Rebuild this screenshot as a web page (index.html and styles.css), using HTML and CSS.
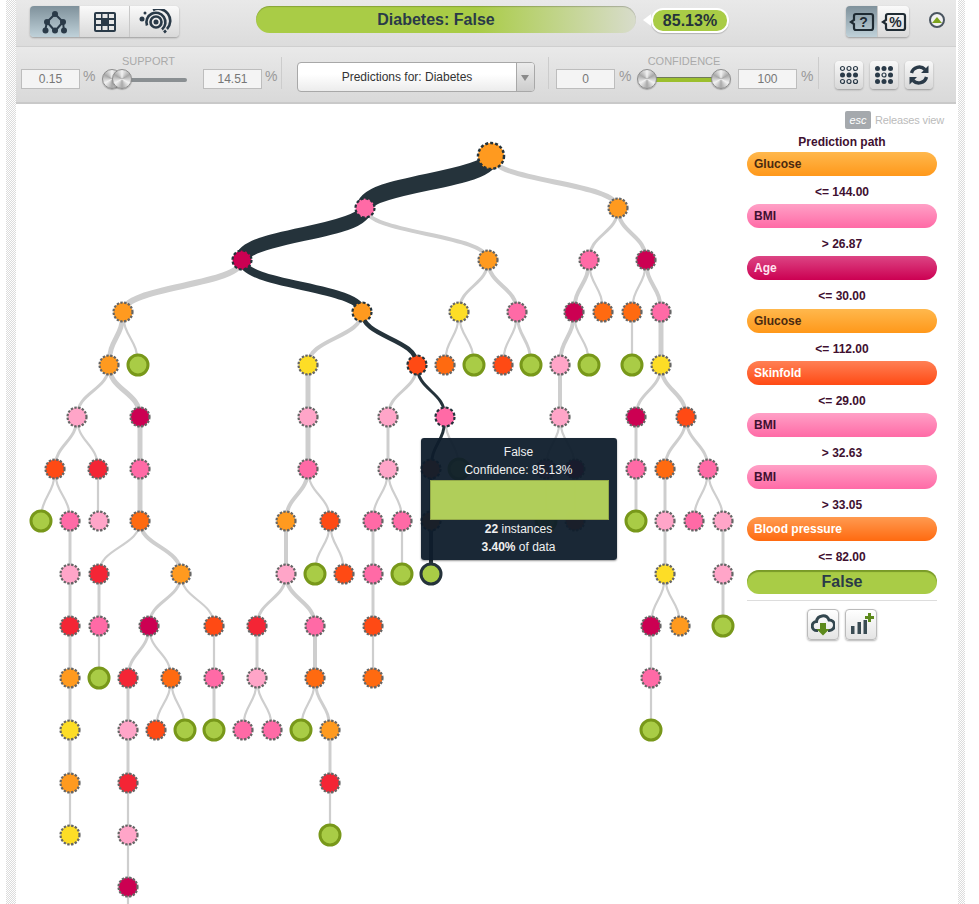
FILE: index.html
```html
<!DOCTYPE html>
<html lang="en">
<head>
    <meta charset="UTF-8">
    <meta name="viewport" content="width=device-width, initial-scale=1.0">
    <title>Decision tree: Diabetes</title>
    <link rel="stylesheet" href="styles.css">
</head>
<body>
<div class="frame">
<div class="app">

    <!-- top bar -->
    <div class="topbar">
        <div class="btn-group views">
            <button class="seg active">
                <svg width="26" height="24" viewBox="0 0 26 24">
                    <path class="ic-line" d="M13 4 5 12 3 21M13 4 21 12 22 21M5 12 13 21M21 12 13 21"/>
                    <circle class="ic-dot" cx="13" cy="4" r="3"/><circle class="ic-dot" cx="5" cy="12" r="3"/><circle class="ic-dot" cx="21" cy="12" r="3"/>
                    <circle class="ic-dot" cx="3.500" cy="20.500" r="3"/><circle class="ic-dot" cx="13" cy="20.500" r="3"/><circle class="ic-dot" cx="22" cy="20.500" r="3"/>
                </svg>
            </button>
            <button class="seg">
                <svg width="24" height="22" viewBox="0 0 24 22">
                    <rect class="ic-dot" x="1" y="1" width="22" height="20" rx="2"/>
                    <path class="ic-cells" d="M3 3h5v4H3zM9.500 3h5v4h-5zM16 3h5v4h-5zM3 9h5v4H3zM16 9h5v4h-5zM3 15h5v4H3zM9.500 15h5v4h-5zM16 15h5v4h-5z"/>
                </svg>
            </button>
            <button class="seg">
                <svg width="34" height="26" viewBox="0 0 34 26">
                    <circle class="ic-dot" cx="4" cy="10" r="2.500"/><circle class="ic-dot" cx="7" cy="4" r="1.500"/>
                    <circle class="ic-dot" cx="18" cy="13" r="2.500"/>
                    <circle class="ic-ring" cx="18" cy="13" r="5.500"/>
                    <path class="ic-ring" d="M9 16.500A9.500 9.500 0 1 1 24 20.500"/>
                    <path class="ic-ring" d="M15 1A12 12 0 0 1 29 20M26 23.500 28 21.500"/>
                </svg>
            </button>
        </div>

        <div class="result">Diabetes: False</div>
        <div class="bubble">85.13%</div>

        <div class="btn-group modes">
            <button class="seg active">
                <svg width="26" height="22" viewBox="0 0 26 22">
                    <path class="ic-bubble" d="M7 3h15a2 2 0 0 1 2 2v12a2 2 0 0 1-2 2H7a2 2 0 0 1-2-2v-4l-3-2 3-2V5a2 2 0 0 1 2-2z"/>
                    <text class="ic-text" x="14.500" y="16">?</text>
                </svg>
            </button>
            <button class="seg">
                <svg width="26" height="22" viewBox="0 0 26 22">
                    <path class="ic-bubble" d="M7 3h15a2 2 0 0 1 2 2v12a2 2 0 0 1-2 2H7a2 2 0 0 1-2-2v-4l-3-2 3-2V5a2 2 0 0 1 2-2z"/>
                    <text class="ic-text" x="14.500" y="16">%</text>
                </svg>
            </button>
        </div>

        <div class="collapse"><span class="collapse-arrow"></span></div>
    </div>

    <!-- filters -->
    <div class="filters">
        <div class="num">0.15</div>
        <div class="unit">%</div>
        <div class="range support">
            <div class="range-label">SUPPORT</div>
            <div class="range-track">
                <div class="track"></div>
                <div class="knob"></div>
                <div class="knob"></div>
            </div>
        </div>
        <div class="num n2">14.51</div>
        <div class="unit">%</div>
        <div class="divider d1"></div>

        <div class="select">
            <div class="select-text">Predictions for: Diabetes</div>
            <div class="select-arrow"></div>
        </div>
        <div class="divider d2"></div>

        <div class="num n3">0</div>
        <div class="unit u3">%</div>
        <div class="range confidence">
            <div class="range-label">CONFIDENCE</div>
            <div class="range-track">
                <div class="track"></div>
                <div class="knob"></div>
                <div class="knob"></div>
            </div>
        </div>
        <div class="num n4">100</div>
        <div class="unit u3">%</div>
        <div class="divider d3"></div>

        <button class="tool t1">
            <svg width="20" height="20" viewBox="0 0 20 20">
                <g class="dots-open">
                    <circle cx="3.500" cy="3.500" r="2"/><circle cx="10" cy="3.500" r="2"/><circle cx="16.500" cy="3.500" r="2"/>
                    <circle cx="3.500" cy="16.500" r="2"/><circle cx="10" cy="16.500" r="2"/><circle cx="16.500" cy="16.500" r="2"/>
                </g>
                <circle class="ic-dot" cx="3.500" cy="10" r="2.500"/><circle class="ic-dot" cx="10" cy="10" r="2.500"/><circle class="ic-dot" cx="16.500" cy="10" r="2.500"/>
            </svg>
        </button>
        <button class="tool">
            <svg width="20" height="20" viewBox="0 0 20 20">
                <circle class="ic-dot" cx="3.500" cy="3.500" r="2.500"/><circle class="ic-dot" cx="10" cy="3.500" r="2.500"/><circle class="ic-dot" cx="16.500" cy="3.500" r="2.500"/>
                <circle class="ic-dot" cx="3.500" cy="10" r="2.500"/><circle class="dots-open one" cx="10" cy="10" r="2"/><circle class="ic-dot" cx="16.500" cy="10" r="2.500"/>
                <circle class="ic-dot" cx="3.500" cy="16.500" r="2.500"/><circle class="ic-dot" cx="10" cy="16.500" r="2.500"/><circle class="ic-dot" cx="16.500" cy="16.500" r="2.500"/>
            </svg>
        </button>
        <button class="tool">
            <svg width="22" height="22" viewBox="0 0 22 22">
                <path class="ic-refresh" d="M3.500 9A8 8 0 0 1 17 5.500"/>
                <path class="ic-refresh" d="M18.500 13A8 8 0 0 1 5 16.500"/>
                <path class="ic-dot" d="M20.500 1.500V9h-7.500zM1.500 20.500V13H9z"/>
            </svg>
        </button>
    </div>

    <!-- tree + side panel -->
    <div class="content">
        <svg class="tree" width="725" height="800" viewBox="16 104 725 800">
            <g class="edges t6">
                <path d="M242 260C242 286 123 286 123 312"/>
            </g>
            <g class="edges t5">
                <path d="M491 156C491 182 618 182 618 208"/>
                <path d="M123 312C123 338 109 338 109 365"/>
                <path d="M109 365C109 391 140 391 140 417"/>
                <path d="M140 417V469"/>
                <path d="M140 469V521"/>
                <path d="M308 365V417"/>
                <path d="M308 417V469"/>
                <path d="M661 312V365"/>
            </g>
            <g class="edges t4">
                <path d="M365 208C365 234 488 234 488 260"/>
                <path d="M618 208C618 234 646 234 646 260"/>
                <path d="M488 260C488 286 517 286 517 312"/>
                <path d="M589 260C589 286 574 286 574 312"/>
                <path d="M646 260C646 286 661 286 661 312"/>
                <path d="M362 312C362 338 308 338 308 365"/>
                <path d="M574 312C574 338 560 338 560 365"/>
                <path d="M560 365V417"/>
                <path d="M661 365C661 391 686 391 686 417"/>
                <path d="M308 469C308 495 286 495 286 521"/>
                <path d="M286 521V574"/>
                <path d="M140 521C140 547 181 547 181 574"/>
                <path d="M286 574C286 600 315 600 315 626"/>
                <path d="M315 626V678"/>
            </g>
            <g class="edges t3">
                <path d="M618 208C618 234 589 234 589 260"/>
                <path d="M488 260C488 286 459 286 459 312"/>
                <path d="M517 312C517 338 531 338 531 365"/>
                <path d="M109 365C109 391 77 391 77 417"/>
                <path d="M417 365C417 391 388 391 388 417"/>
                <path d="M661 365C661 391 636 391 636 417"/>
                <path d="M77 417C77 443 55 443 55 469"/>
                <path d="M388 417V469"/>
                <path d="M636 417V469"/>
                <path d="M686 417C686 443 665 443 665 469"/>
                <path d="M686 417C686 443 708 443 708 469"/>
                <path d="M636 469V521"/>
                <path d="M665 469V521"/>
                <path d="M70 521V574"/>
                <path d="M373 521V574"/>
                <path d="M665 521V574"/>
                <path d="M723 521V574"/>
                <path d="M70 574V626"/>
                <path d="M99 574V626"/>
                <path d="M181 574C181 600 149 600 149 626"/>
                <path d="M286 574C286 600 257 600 257 626"/>
                <path d="M373 574V626"/>
                <path d="M723 574V626"/>
                <path d="M70 626V678"/>
                <path d="M149 626C149 652 128 652 128 678"/>
                <path d="M257 626V678"/>
                <path d="M70 678V730"/>
                <path d="M128 678V730"/>
                <path d="M214 678V730"/>
                <path d="M70 730V783"/>
                <path d="M128 730V783"/>
                <path d="M330 730V783"/>
                <path d="M315 678C315 704 330 704 330 730"/>
            </g>
            <g class="edges t2">
                <path d="M589 260C589 286 603 286 603 312"/>
                <path d="M646 260C646 286 632 286 632 312"/>
                <path d="M123 312C123 338 138 338 138 365"/>
                <path d="M459 312C459 338 445 338 445 365"/>
                <path d="M459 312C459 338 474 338 474 365"/>
                <path d="M517 312C517 338 503 338 503 365"/>
                <path d="M574 312C574 338 589 338 589 365"/>
                <path d="M632 312V365"/>
                <path d="M77 417C77 443 98 443 98 469"/>
                <path d="M445 417C445 443 459 443 459 469"/>
                <path d="M560 417C560 443 546 443 546 469"/>
                <path d="M560 417C560 443 575 443 575 469"/>
                <path d="M55 469C55 495 41 495 41 521"/>
                <path d="M55 469C55 495 70 495 70 521"/>
                <path d="M98 469V521"/>
                <path d="M308 469C308 495 330 495 330 521"/>
                <path d="M388 469C388 495 373 495 373 521"/>
                <path d="M388 469C388 495 402 495 402 521"/>
                <path d="M546 469V521"/>
                <path d="M575 469V521"/>
                <path d="M708 469C708 495 694 495 694 521"/>
                <path d="M708 469C708 495 723 495 723 521"/>
                <path d="M140 521C140 547 99 547 99 574"/>
                <path d="M330 521C330 547 315 547 315 574"/>
                <path d="M330 521C330 547 344 547 344 574"/>
                <path d="M402 521V574"/>
                <path d="M181 574C181 600 214 600 214 626"/>
                <path d="M665 574C665 600 651 600 651 626"/>
                <path d="M665 574C665 600 680 600 680 626"/>
                <path d="M99 626V678"/>
                <path d="M149 626C149 652 171 652 171 678"/>
                <path d="M214 626V678"/>
                <path d="M373 626V678"/>
                <path d="M651 626V678"/>
                <path d="M171 678C171 704 156 704 156 730"/>
                <path d="M171 678C171 704 185 704 185 730"/>
                <path d="M257 678C257 704 243 704 243 730"/>
                <path d="M257 678C257 704 272 704 272 730"/>
                <path d="M315 678C315 704 301 704 301 730"/>
                <path d="M651 678V730"/>
                <path d="M70 783V835"/>
                <path d="M128 783V835"/>
                <path d="M330 783V835"/>
                <path d="M128 835V887"/>
                <path d="M128 887V904"/>
            </g>

            <!-- prediction path -->
            <g class="edges on">
                <path class="p16" d="M491 156C491 182 365 182 365 208"/>
                <path class="p13" d="M365 208C365 234 242 234 242 260"/>
                <path class="p8" d="M242 260C242 286 362 286 362 312"/>
                <path class="p5" d="M362 312C362 338 417 338 417 365"/>
                <path class="p3" d="M417 365C417 391 445 391 445 417"/>
                <path class="p3" d="M445 417C445 443 431 443 431 469"/>
                <path class="p3" d="M431 469V521"/>
                <path class="p4" d="M431 521V574"/>
            </g>

            <!-- level 0-3 -->
            <circle class="n on root orange" cx="491" cy="156" r="13"/>
            <circle class="n on pink" cx="365" cy="208" r="9.500"/>
            <circle class="n orange" cx="618" cy="208" r="9.500"/>
            <circle class="n on crimson" cx="242" cy="260" r="9.500"/>
            <circle class="n orange" cx="488" cy="260" r="9.500"/>
            <circle class="n pink" cx="589" cy="260" r="9.500"/>
            <circle class="n crimson" cx="646" cy="260" r="9.500"/>
            <circle class="n orange" cx="123" cy="312" r="9.500"/>
            <circle class="n on orange" cx="362" cy="312" r="9.500"/>
            <circle class="n yellow" cx="459" cy="312" r="9.500"/>
            <circle class="n pink" cx="517" cy="312" r="9.500"/>
            <circle class="n crimson" cx="574" cy="312" r="9.500"/>
            <circle class="n tangerine" cx="603" cy="312" r="9.500"/>
            <circle class="n tangerine" cx="632" cy="312" r="9.500"/>
            <circle class="n pink" cx="661" cy="312" r="9.500"/>
            <!-- level 4 -->
            <circle class="n orange" cx="109" cy="365" r="9.500"/>
            <circle class="leaf" cx="138" cy="365" r="10"/>
            <circle class="n yellow" cx="308" cy="365" r="9.500"/>
            <circle class="n on scarlet" cx="417" cy="365" r="9.500"/>
            <circle class="n tangerine" cx="445" cy="365" r="9.500"/>
            <circle class="leaf" cx="474" cy="365" r="10"/>
            <circle class="n scarlet" cx="503" cy="365" r="9.500"/>
            <circle class="leaf" cx="531" cy="365" r="10"/>
            <circle class="n rose" cx="560" cy="365" r="9.500"/>
            <circle class="leaf" cx="589" cy="365" r="10"/>
            <circle class="leaf" cx="632" cy="365" r="10"/>
            <circle class="n yellow" cx="661" cy="365" r="9.500"/>
            <!-- level 5 -->
            <circle class="n rose" cx="77" cy="417" r="9.500"/>
            <circle class="n crimson" cx="140" cy="417" r="9.500"/>
            <circle class="n rose" cx="308" cy="417" r="9.500"/>
            <circle class="n rose" cx="388" cy="417" r="9.500"/>
            <circle class="n on pink" cx="445" cy="417" r="9.500"/>
            <circle class="n rose" cx="560" cy="417" r="9.500"/>
            <circle class="n crimson" cx="636" cy="417" r="9.500"/>
            <circle class="n scarlet" cx="686" cy="417" r="9.500"/>
            <!-- level 6 -->
            <circle class="n scarlet" cx="55" cy="469" r="9.500"/>
            <circle class="n red" cx="98" cy="469" r="9.500"/>
            <circle class="n pink" cx="140" cy="469" r="9.500"/>
            <circle class="n pink" cx="308" cy="469" r="9.500"/>
            <circle class="n rose" cx="388" cy="469" r="9.500"/>
            <circle class="n on scarlet" cx="431" cy="469" r="9.500"/>
            <circle class="leaf" cx="459" cy="469" r="10"/>
            <circle class="n pink" cx="546" cy="469" r="9.500"/>
            <circle class="n crimson" cx="575" cy="469" r="9.500"/>
            <circle class="n pink" cx="636" cy="469" r="9.500"/>
            <circle class="n tangerine" cx="665" cy="469" r="9.500"/>
            <circle class="n pink" cx="708" cy="469" r="9.500"/>
            <!-- level 7 -->
            <circle class="leaf" cx="41" cy="521" r="10"/>
            <circle class="n pink" cx="70" cy="521" r="9.500"/>
            <circle class="n rose" cx="99" cy="521" r="9.500"/>
            <circle class="n tangerine" cx="140" cy="521" r="9.500"/>
            <circle class="n orange" cx="286" cy="521" r="9.500"/>
            <circle class="n scarlet" cx="330" cy="521" r="9.500"/>
            <circle class="n pink" cx="373" cy="521" r="9.500"/>
            <circle class="n pink" cx="402" cy="521" r="9.500"/>
            <circle class="n on tangerine" cx="431" cy="521" r="9.500"/>
            <circle class="leaf" cx="546" cy="521" r="10"/>
            <circle class="n scarlet" cx="575" cy="521" r="9.500"/>
            <circle class="leaf" cx="636" cy="521" r="10"/>
            <circle class="n rose" cx="665" cy="521" r="9.500"/>
            <circle class="n pink" cx="694" cy="521" r="9.500"/>
            <circle class="n rose" cx="723" cy="521" r="9.500"/>
            <!-- level 8 -->
            <circle class="n rose" cx="70" cy="574" r="9.500"/>
            <circle class="n red" cx="99" cy="574" r="9.500"/>
            <circle class="n orange" cx="181" cy="574" r="9.500"/>
            <circle class="n rose" cx="286" cy="574" r="9.500"/>
            <circle class="leaf" cx="315" cy="574" r="10"/>
            <circle class="n scarlet" cx="344" cy="574" r="9.500"/>
            <circle class="n pink" cx="373" cy="574" r="9.500"/>
            <circle class="leaf" cx="402" cy="574" r="10"/>
            <circle class="leaf on" cx="431" cy="574" r="10"/>
            <circle class="n yellow" cx="665" cy="574" r="9.500"/>
            <circle class="n rose" cx="723" cy="574" r="9.500"/>
            <!-- level 9 -->
            <circle class="n red" cx="70" cy="626" r="9.500"/>
            <circle class="n pink" cx="99" cy="626" r="9.500"/>
            <circle class="n crimson" cx="149" cy="626" r="9.500"/>
            <circle class="n scarlet" cx="214" cy="626" r="9.500"/>
            <circle class="n red" cx="257" cy="626" r="9.500"/>
            <circle class="n pink" cx="315" cy="626" r="9.500"/>
            <circle class="n scarlet" cx="373" cy="626" r="9.500"/>
            <circle class="n crimson" cx="651" cy="626" r="9.500"/>
            <circle class="n orange" cx="680" cy="626" r="9.500"/>
            <circle class="leaf" cx="723" cy="626" r="10"/>
            <!-- level 10 -->
            <circle class="n orange" cx="70" cy="678" r="9.500"/>
            <circle class="leaf" cx="99" cy="678" r="10"/>
            <circle class="n red" cx="128" cy="678" r="9.500"/>
            <circle class="n tangerine" cx="171" cy="678" r="9.500"/>
            <circle class="n pink" cx="214" cy="678" r="9.500"/>
            <circle class="n rose" cx="257" cy="678" r="9.500"/>
            <circle class="n tangerine" cx="315" cy="678" r="9.500"/>
            <circle class="n tangerine" cx="373" cy="678" r="9.500"/>
            <circle class="n pink" cx="651" cy="678" r="9.500"/>
            <!-- level 11 -->
            <circle class="n yellow" cx="70" cy="730" r="9.500"/>
            <circle class="n rose" cx="128" cy="730" r="9.500"/>
            <circle class="n scarlet" cx="156" cy="730" r="9.500"/>
            <circle class="leaf" cx="185" cy="730" r="10"/>
            <circle class="leaf" cx="214" cy="730" r="10"/>
            <circle class="n pink" cx="243" cy="730" r="9.500"/>
            <circle class="n pink" cx="272" cy="730" r="9.500"/>
            <circle class="leaf" cx="301" cy="730" r="10"/>
            <circle class="n orange" cx="330" cy="730" r="9.500"/>
            <circle class="leaf" cx="651" cy="730" r="10"/>
            <!-- level 12-14 -->
            <circle class="n orange" cx="70" cy="783" r="9.500"/>
            <circle class="n red" cx="128" cy="783" r="9.500"/>
            <circle class="n red" cx="330" cy="783" r="9.500"/>
            <circle class="n yellow" cx="70" cy="835" r="9.500"/>
            <circle class="n rose" cx="128" cy="835" r="9.500"/>
            <circle class="leaf" cx="330" cy="835" r="10"/>
            <circle class="n crimson" cx="128" cy="887" r="9.500"/>
        </svg>

        <div class="tooltip">
            <div class="tip-line">False</div>
            <div class="tip-line">Confidence: 85.13%</div>
            <div class="tip-bar"></div>
            <div class="tip-line"><b>22</b> instances</div>
            <div class="tip-line"><b>3.40%</b> of data</div>
        </div>

        <div class="panel">
            <div class="esc-row"><span class="esc">esc</span><span class="esc-text">Releases view</span></div>
            <div class="path-title">Prediction path</div>
            <div class="pill p-orange">Glucose</div>
            <div class="cond">&lt;= 144.00</div>
            <div class="pill p-pink">BMI</div>
            <div class="cond">&gt; 26.87</div>
            <div class="pill p-crimson">Age</div>
            <div class="cond">&lt;= 30.00</div>
            <div class="pill p-orange">Glucose</div>
            <div class="cond">&lt;= 112.00</div>
            <div class="pill p-scarlet">Skinfold</div>
            <div class="cond">&lt;= 29.00</div>
            <div class="pill p-pink">BMI</div>
            <div class="cond">&gt; 32.63</div>
            <div class="pill p-pink">BMI</div>
            <div class="cond">&gt; 33.05</div>
            <div class="pill p-tangerine">Blood pressure</div>
            <div class="cond">&lt;= 82.00</div>
            <div class="pill p-false">False</div>
            <div class="panel-line"></div>
            <div class="panel-btns">
                <button class="tool small">
                    <svg width="24" height="24" viewBox="0 0 24 24">
                        <path class="ic-cloud" d="M7 18.500H6a4.500 4.500 0 0 1-.5-9A6.500 6.500 0 0 1 18 8a5 5 0 0 1 .5 10.500H17"/>
                        <path class="ic-green" d="M9 11h6v6h3.500L12 23.500 5.500 17H9z"/>
                    </svg>
                </button>
                <button class="tool small">
                    <svg width="26" height="24" viewBox="0 0 26 24">
                        <path class="ic-bars" d="M3 14h3.500v8H3zM9.500 10H13v12H9.500zM15.500 8H19v14h-3.500z"/>
                        <path class="ic-green" d="M20 1h3v3h3v3h-3v3h-3V7h-3V4h3z"/>
                    </svg>
                </button>
            </div>
        </div>
    </div>

</div>
</div>
</body>
</html>
```

FILE: styles.css
```css
* {
    box-sizing: border-box;
}

body {
    margin: 0;
    background-color: #fff;
    font-family: "Liberation Sans", Arial, sans-serif;
    overflow: hidden;
}

.frame {
    margin-left: 6px;
    width: 959px;
    height: 904px;
    padding-left: 10px;
    background: repeating-conic-gradient(#dcdcdc 0 25%, #fff 0 50%) 0 0 / 2px 2px;
}

.app {
    width: 942px;
    height: 904px;
    background-color: #fff;
    border-right: 2px solid #fff;
}

button {
    padding: 0;
    border: none;
    font-family: inherit;
}

/* top bar */
.topbar {
    display: flex;
    height: 47px;
    padding: 6px 0 0 14px;
    background: linear-gradient(#e9e9e9, #dcdcdc);
    border-bottom: 1px solid #cfcfcf;
}

.btn-group {
    display: flex;
    height: 31px;
    border-radius: 4px;
    box-shadow: 0 1px 2px rgba(0, 0, 0, 0.3);
}

.views {
    width: 149px;
}

.modes {
    width: 63px;
    margin-left: 117px;
}

.seg {
    flex: 1;
    display: flex;
    align-items: center;
    justify-content: center;
    background: linear-gradient(#fafafa, #d9d9d9);
    border-left: 1px solid #c8c8c8;
}

.seg:first-child {
    border-left: none;
    border-radius: 4px 0 0 4px;
}

.seg:last-child {
    border-radius: 0 4px 4px 0;
}

.seg.active {
    background: linear-gradient(#7f919b, #bfd1d9);
}

.result {
    width: 380px;
    height: 27px;
    margin-left: 77px;
    padding-right: 20px;
    border-radius: 14px;
    background: linear-gradient(90deg, #a9cc46 58%, #d8dccb 100%);
    box-shadow: inset 0 1px 1px rgba(0, 0, 0, 0.2);
    color: #2a3a48;
    font-size: 16px;
    font-weight: bold;
    line-height: 27px;
    text-align: center;
}

.bubble {
    position: relative;
    width: 78px;
    height: 25px;
    margin: 2px 0 0 15px;
    border: 2px solid #fff;
    border-radius: 12px;
    background-color: #a9cc46;
    box-shadow: 0 1px 1px rgba(0, 0, 0, 0.2);
    color: #25333b;
    font-size: 16px;
    font-weight: bold;
    line-height: 21px;
    text-align: center;
}

.bubble::before {
    content: "";
    position: absolute;
    left: -10px;
    top: 4px;
    border: 6px solid transparent;
    border-left: none;
    border-right: 8px solid #fff;
}

.collapse {
    display: flex;
    align-items: center;
    justify-content: center;
    width: 16px;
    height: 16px;
    margin: 6px 0 0 20px;
    border: 2px solid #4a5560;
    border-radius: 50%;
    background-color: #f2f2f2;
}

.collapse-arrow {
    border: 5px solid transparent;
    border-top: none;
    border-bottom: 6px solid #7da31e;
}

/* filters */
.filters {
    display: flex;
    align-items: flex-start;
    height: 57px;
    padding-left: 5px;
    background: linear-gradient(#e9e9e9, #d9d9d9);
    border-bottom: 2px solid #c9c9c9;
}

.num {
    width: 59px;
    height: 20px;
    margin-top: 22px;
    border: 1px solid #bdbdbd;
    background-color: #f4f4f4;
    color: #777;
    font-size: 12px;
    line-height: 19px;
    text-align: center;
}

.n2 {
    margin-left: 6px;
}

.n3 {
    margin-left: 7px;
}

.n4 {
    margin-left: 5px;
}

.unit {
    width: 10px;
    margin: 22px 0 0 3px;
    color: #999;
    font-size: 14px;
    line-height: 15px;
}

.u3 {
    margin-left: 4px;
}

.divider {
    width: 1px;
    height: 32px;
    margin-top: 10px;
    background-color: #ccc;
}

.d1 {
    margin-left: 6px;
}

.d2 {
    margin-left: 13px;
}

.d3 {
    margin-left: 7px;
}

.range {
    margin-top: 7px;
}

.support {
    width: 100px;
    margin-left: 4px;
}

.support .range-label {
    padding-left: 3px;
}

.confidence {
    width: 98px;
    margin-left: 6px;
}

.range-label {
    height: 14px;
    color: #aaa;
    font-size: 11px;
    line-height: 14px;
    text-align: center;
}

.range-track {
    position: relative;
    height: 22px;
}

.track {
    position: absolute;
    top: 10px;
    height: 4px;
    border-radius: 2px;
    background-color: #8a8f92;
}

.support .track {
    left: 33px;
    width: 57px;
}

.confidence .track {
    top: 9px;
    left: 12px;
    width: 74px;
    height: 5px;
    border-radius: 0;
    background: linear-gradient(#6f7a5a 1px, #9cbf2e 1px);
}

.knob {
    position: absolute;
    top: 1px;
    width: 20px;
    height: 20px;
    border: 1px solid #8d8d8d;
    border-radius: 50%;
    background: conic-gradient(#f2f2f2, #a8a8a8, #f2f2f2, #a8a8a8, #f2f2f2, #a8a8a8, #f2f2f2);
    box-shadow: 0 1px 1px rgba(0, 0, 0, 0.25);
}

.support .knob:nth-child(2) {
    left: 5px;
}

.support .knob:nth-child(3) {
    left: 15px;
}

.confidence .knob:nth-child(2) {
    left: 2px;
}

.confidence .knob:nth-child(3) {
    left: 76px;
}

.select {
    display: flex;
    width: 238px;
    height: 30px;
    margin: 15px 0 0 15px;
    border: 1px solid #a8a8a8;
    border-radius: 4px;
    background: linear-gradient(#fff 40%, #ececec);
}

.select-text {
    flex: 1;
    color: #333;
    font-size: 12px;
    line-height: 28px;
    text-align: center;
}

.select-arrow {
    position: relative;
    width: 18px;
    border-left: 1px solid #a8a8a8;
    border-radius: 0 3px 3px 0;
    background: linear-gradient(#ececec, #cdcdcd);
}

.select-arrow::after {
    content: "";
    position: absolute;
    left: 4px;
    top: 12px;
    border: 4px solid transparent;
    border-bottom: none;
    border-top: 6px solid #8a8a8a;
}

.tool {
    display: flex;
    align-items: center;
    justify-content: center;
    width: 28px;
    height: 28px;
    margin: 14px 0 0 7px;
    border-radius: 4px;
    background: linear-gradient(#f8f8f8, #d8d8d8);
    box-shadow: 0 1px 2px rgba(0, 0, 0, 0.3);
}

.tool.t1 {
    margin-left: 16px;
}

/* icons */
.ic-line {
    fill: none;
    stroke: #2a3a48;
    stroke-width: 2;
}

.ic-dot {
    fill: #2a3a48;
}

.ic-cells {
    fill: #e8e8e8;
}

.ic-ring {
    fill: none;
    stroke: #2a3a48;
    stroke-width: 2.600;
}

.ic-bubble {
    fill: none;
    stroke: #1f2b33;
    stroke-width: 2.200;
}

.ic-text {
    fill: #1f2b33;
    font-size: 14px;
    font-weight: bold;
    text-anchor: middle;
}

.dots-open circle,
.dots-open.one {
    fill: none;
    stroke: #2a3a48;
    stroke-width: 1.200;
}

.ic-refresh {
    fill: none;
    stroke: #2a3a48;
    stroke-width: 3.400;
}

.ic-cloud {
    fill: none;
    stroke: #33474f;
    stroke-width: 3;
}

.ic-green {
    fill: #5d8a1c;
}

.ic-bars {
    fill: #3a4c54;
}

/* tree */
.content {
    position: relative;
    display: flex;
    height: 800px;
    overflow: hidden;
}

.tree {
    flex: none;
}

.edges {
    fill: none;
    stroke: #cecece;
}

.t6 { stroke-width: 6; }
.t5 { stroke-width: 5; }
.t4 { stroke-width: 4; }
.t3 { stroke-width: 3; }
.t2 { stroke-width: 2.200; }

.edges.on {
    stroke: #25333b;
}

.p16 { stroke-width: 17; }
.p13 { stroke-width: 14; }
.p8 { stroke-width: 8; }
.p5 { stroke-width: 4.500; }
.p4 { stroke-width: 4; }
.p3 { stroke-width: 3; }

.n {
    stroke: #666;
    stroke-width: 2.200;
    stroke-dasharray: 2.400 1.400;
}

.n.on {
    stroke: #25333b;
    stroke-dasharray: 3 2;
}

.root {
    stroke-width: 2.500;
}

.leaf {
    fill: #a9cc46;
    stroke: #78981a;
    stroke-width: 3;
}

.leaf.on {
    stroke: #25333b;
}

.orange { fill: #ff9a1f; }
.pink { fill: #ff6aa6; }
.crimson { fill: #cc0052; }
.yellow { fill: #fddd26; }
.rose { fill: #ffa5c8; }
.scarlet { fill: #ff4a14; }
.red { fill: #f42535; }
.tangerine { fill: #ff6a10; }

/* tooltip */
.tooltip {
    position: absolute;
    left: 405px;
    top: 334px;
    width: 196px;
    height: 122px;
    padding: 5px 8px 0 9px;
    border-radius: 3px;
    background-color: rgba(14, 28, 43, 0.95);
    box-shadow: 0 1px 2px rgba(0, 0, 0, 0.4);
    color: #f0f0f0;
    font-size: 12px;
}

.tip-line {
    height: 18px;
    padding-right: 2px;
    line-height: 18px;
    text-align: center;
}

.tip-bar {
    height: 40px;
    margin-top: 1px;
    border: 1px solid #93a94a;
    background-color: rgba(188, 220, 92, 0.93);
}

/* side panel */
.panel {
    width: 197px;
    margin-left: 6px;
}

.esc-row {
    display: flex;
    align-items: center;
    justify-content: flex-end;
    height: 18px;
    margin-top: 7px;
}

.esc {
    width: 26px;
    height: 18px;
    border-radius: 2px;
    background-color: #a5a9ad;
    color: #fff;
    font-size: 11px;
    font-style: italic;
    line-height: 18px;
    text-align: center;
}

.esc-text {
    margin-left: 4px;
    color: #bbb;
    font-size: 11px;
    letter-spacing: -0.150px;
}

.path-title {
    width: 190px;
    height: 23px;
    color: #401030;
    font-size: 12px;
    font-weight: bold;
    line-height: 27px;
    text-align: center;
}

.pill {
    width: 190px;
    height: 24px;
    padding-left: 7px;
    border-radius: 12px;
    font-size: 12px;
    font-weight: bold;
    line-height: 24px;
}

.cond {
    width: 190px;
    height: 28.200px;
    color: #401030;
    font-size: 12px;
    font-weight: bold;
    line-height: 32px;
    text-align: center;
}

.p-orange {
    background: linear-gradient(#ffb84d, #ff981a);
    color: #4a2a10;
}

.p-pink {
    background: linear-gradient(#ffa0c6, #ff6aa6);
    color: #401030;
}

.p-crimson {
    background: linear-gradient(#dc4584, #cc0052);
    color: #ffe3ef;
}

.p-scarlet {
    background: linear-gradient(#ff8055, #ff4a14);
    color: #fff;
}

.p-tangerine {
    background: linear-gradient(#ff9a50, #ff6a10);
    color: #fff;
}

.p-false {
    padding-left: 0;
    background-color: #a9cc46;
    box-shadow: inset 0 2px 1px rgba(90, 120, 20, 0.6);
    color: #2a3a48;
    font-size: 16px;
    text-align: center;
}

.panel-line {
    width: 190px;
    height: 1px;
    margin-top: 6px;
    background-color: #ddd;
}

.panel-btns {
    display: flex;
    justify-content: center;
    gap: 6px;
    width: 190px;
    margin-top: 8px;
}

.tool.small {
    width: 32px;
    height: 31px;
    margin: 0;
    border: 1px solid #bbb;
    background: linear-gradient(#fff, #e4e4e4);
}
```
